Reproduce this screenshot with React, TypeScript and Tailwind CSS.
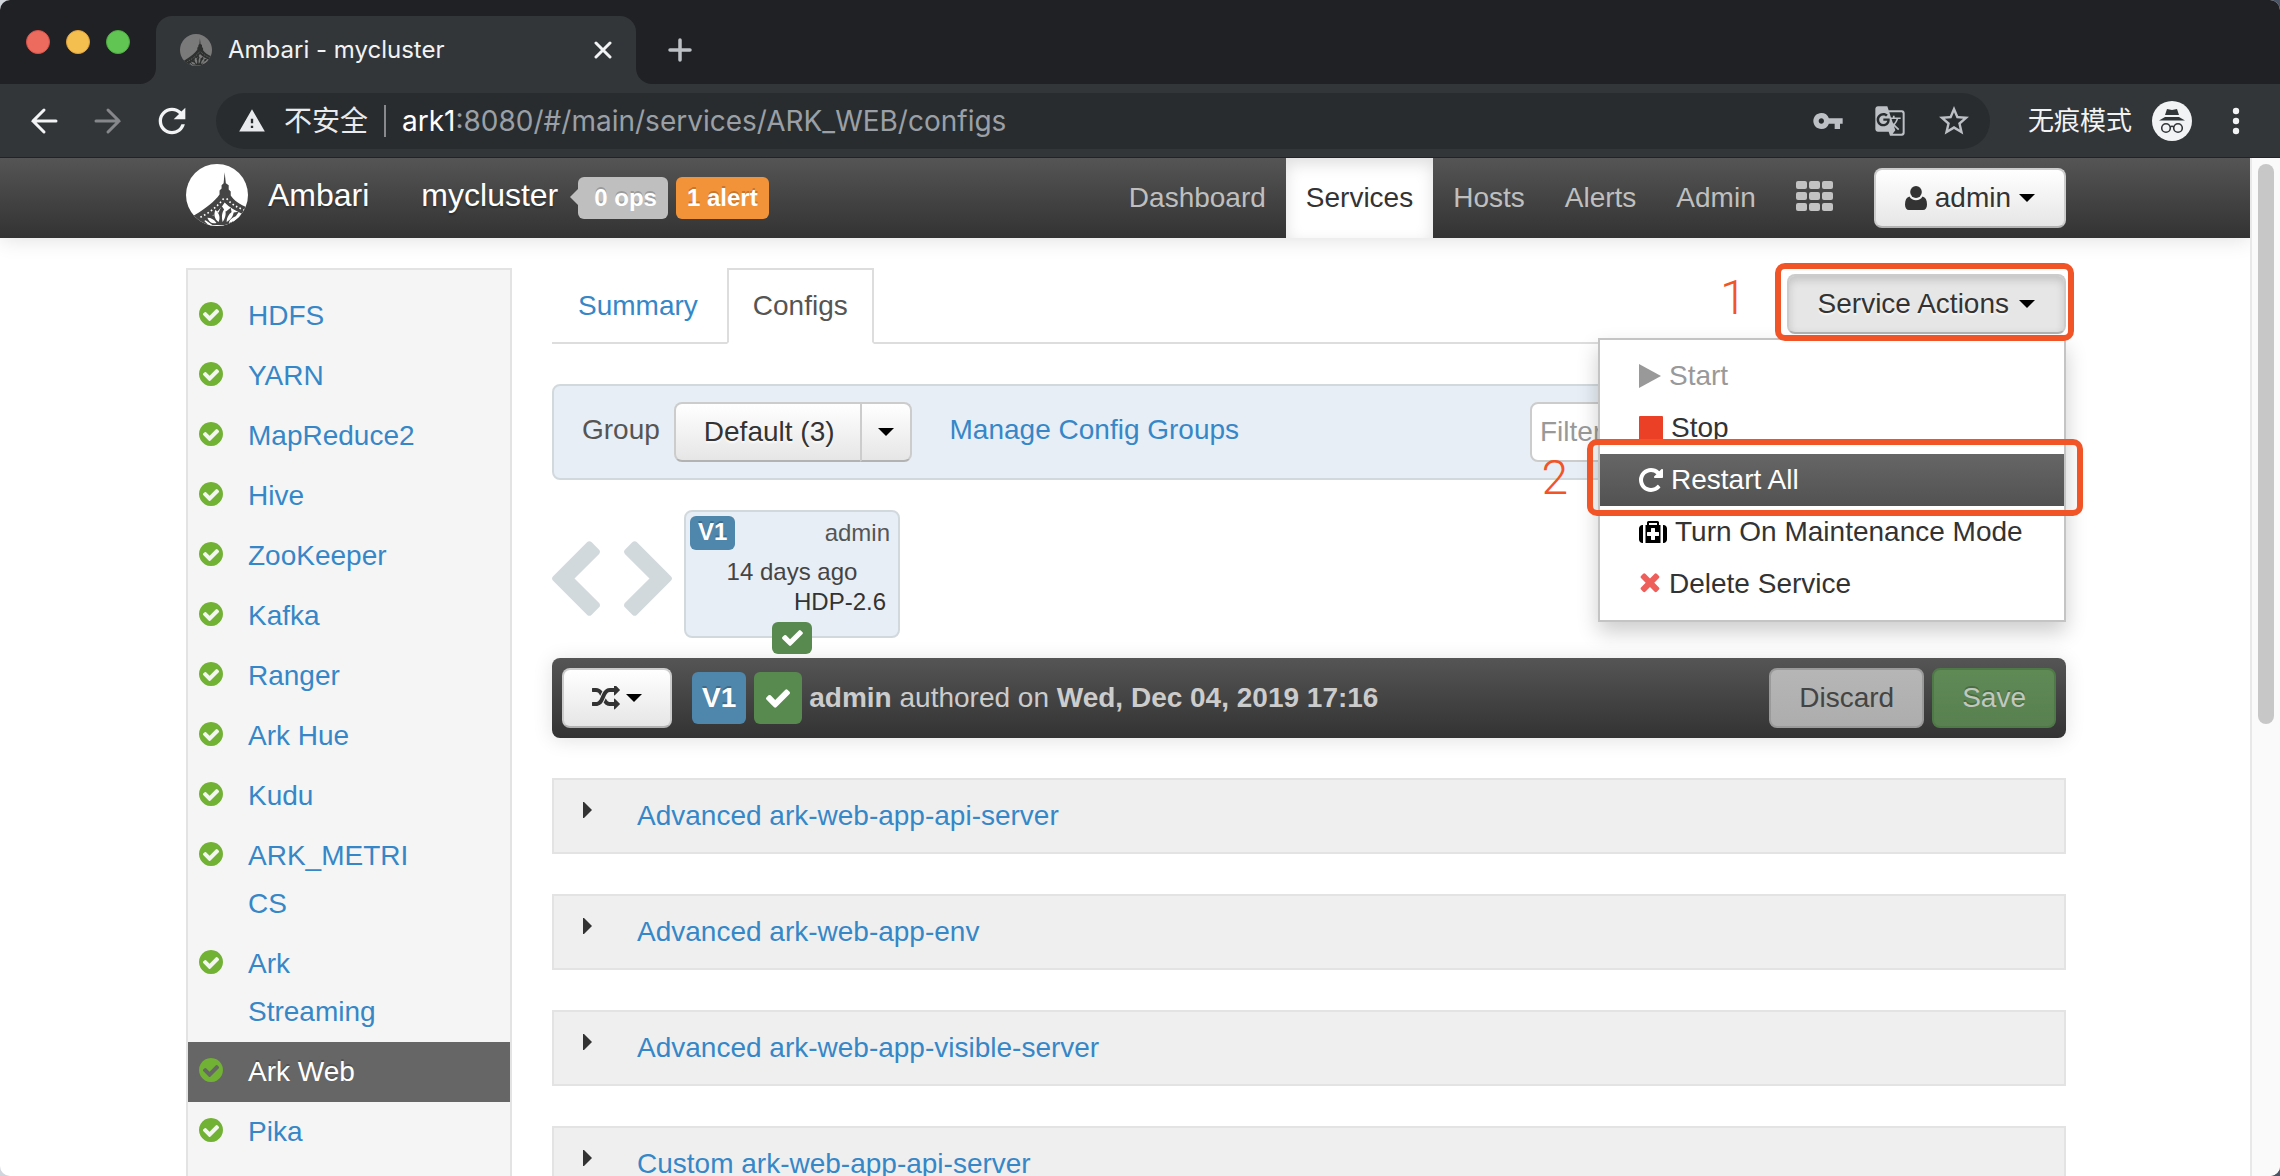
import { Fragment, type ReactNode } from "react";
import { MdGTranslate, MdRefresh, MdStarBorder, MdVpnKey, MdWarning } from "react-icons/md";

const CHECK_CIRCLE =
  "M1412 734q0-28-18-46l-91-90q-19-19-45-19t-45 19l-408 407-226-226q-19-19-45-19t-45 19l-91 90q-18 18-18 46 0 27 18 45l362 362q19 19 45 19 27 0 46-19l543-543q18-18 18-45zm252 162q0 209-103 385.5t-279.5 279.5-385.5 103-385.5-103-279.5-279.5-103-385.5 103-385.5 279.5-279.5 385.5-103 385.5 103 279.5 279.5 103 385.5z";
const CHECK =
  "M1671 566q0 40-28 68l-724 724-136 136q-28 28-68 28t-68-28l-136-136-362-362q-28-28-28-68t28-68l136-136q28-28 68-28t68 28l294 295 656-657q28-28 68-28t68 28l136 136q28 28 28 68z";
const TIMES =
  "M1490 1322q0 40-28 68l-136 136q-28 28-68 28t-68-28l-294-294-294 294q-28 28-68 28t-68-28l-136-136q-28-28-28-68t28-68l294-294-294-294q-28-28-28-68t28-68l136-136q28-28 68-28t68 28l294 294 294-294q28-28 68-28t68 28l136 136q28 28 28 68t-28 68l-294 294 294 294q28 28 28 68z";
const REPEAT =
  "M1664 256v448q0 26-19 45t-45 19h-448q-42 0-59-40-17-39 14-69l138-138q-148-137-349-137-104 0-198.5 40.5t-163.5 109.5-109.5 163.5-40.5 198.5 40.5 198.5 109.5 163.5 163.5 109.5 198.5 40.5q119 0 225-52t179-147q7-10 23-12 15 0 25 9l137 138q9 8 9.5 20.5t-7.5 22.5q-109 132-264 204.5t-327 72.5q-156 0-298-61t-245-164-164-245-61-298 61-298 164-245 245-164 298-61q147 0 284.5 55.5t244.5 156.5l130-129q29-31 70-14 39 17 39 59z";
const RANDOM =
  "M666 481q-60 92-137 273-22-45-37-72.5t-40.5-63.5-51-56.5-63-35-81.5-14.5h-224q-14 0-23-9t-9-23v-192q0-14 9-23t23-9h224q250 0 410 225zm1126 799q0 14-9 23l-320 320q-9 9-23 9-13 0-22.5-9.5t-9.5-22.5v-192q-32 0-85 .5t-81 1-73-1-71-5-64-10.5-63-18.5-58-28.5-59-40-55-53.5-56-69.5q59-93 136-273 22 45 37 72.5t40.5 63.5 51 56.5 63 35 81.5 14.5h256v-192q0-14 9-23t23-9q12 0 24 10l319 319q9 9 9 23zm0-896q0 14-9 23l-320 320q-9 9-23 9-13 0-22.5-9.5t-9.5-22.5v-192h-256q-48 0-87 15t-69 45-51 61.5-45 77.5q-32 62-78 171-29 66-49.5 111t-54 105-64 100-74 83-90 68.5-106.5 42-128 16.5h-224q-14 0-23-9t-9-23v-192q0-14 9-23t23-9h224q48 0 87-15t69-45 51-61.5 45-77.5q32-62 78-171 29-66 49.5-111t54-105 64-100 74-83 90-68.5 106.5-42 128-16.5h256v-192q0-14 9-23t23-9q12 0 24 10l319 319q9 9 9 23z";
const MEDKIT =
  "M1280 1056v-192q0-14-9-23t-23-9h-224v-224q0-14-9-23t-23-9h-192q-14 0-23 9t-9 23v224h-224q-14 0-23 9t-9 23v192q0 14 9 23t23 9h224v224q0 14 9 23t23 9h192q14 0 23-9t9-23v-224h224q14 0 23-9t9-23zm-640-672h512v-128h-512v128zm-384 0v1152h-32q-92 0-158-66t-66-158v-704q0-92 66-158t158-66h32zm1120 0v1152h-960v-1152h96v-160q0-40 28-68t68-28h576q40 0 68 28t28 68v160h96zm416 224v704q0 92-66 158t-158 66h-32v-1152h32q92 0 158 66t66 158z";
const CHEVRON =
  "M1427 301l-531 531 531 531q19 19 19 45t-19 45l-166 166q-19 19-45 19t-45-19l-742-742q-19-19-19-45t19-45l742-742q19-19 45-19t45 19l166 166q19 19 19 45t-19 45z";

function Glyph({ d, viewBox, className }: { d: string; viewBox: string; className: string }) {
  return (
    <svg viewBox={viewBox} className={className} fill="currentColor" fillRule="evenodd" aria-hidden="true">
      <path d={d} />
    </svg>
  );
}

function Caret({ className = "" }: { className?: string }) {
  return (
    <svg viewBox="0 0 16 8" className={`h-2 w-4 shrink-0 text-black ${className}`} fill="currentColor" aria-hidden="true">
      <path d="M0 0h16L8 8z" />
    </svg>
  );
}

function AmbariLogo({ className, light, dark }: { className: string; light: string; dark: string }) {
  return (
    <svg viewBox="0 0 61 61" className={className} aria-hidden="true">
      <clipPath id={`disc-${light.slice(1)}`}>
        <circle cx="30.5" cy="30.5" r="30.5" />
      </clipPath>
      <g clipPath={`url(#disc-${light.slice(1)})`}>
        <path d="M0 0h61v61H0z" fill={light} />
        <path
          d="M38 8l1.2 11 2.8 2v4l2 2v4c3 5 9 9 17 12v18H0V54l9-4c10-6 19-13 24-20v-4l2-2v-3l2-2z"
          fill={dark}
        />
        <path d="M37 34c-6 8-14 14-24 19" fill="none" stroke={light} strokeWidth="1.6" strokeDasharray="1.6 2.4" />
        <path d="M40 34c5 6 11 9 19 12" fill="none" stroke={light} strokeWidth="1.6" strokeDasharray="1.6 2.4" />
        <path d="M38 38c5 5 10 8 17 11l-3 6-14 6H23l-5-5c9-5 15-10 20-18z" fill={light} />
        <path d="M22 50l5 1 1-5 4 2 3-7 4 6 5-4 1 5 7-1-4 6-3 7H26l-7-5z" fill={dark} />
        <path
          d="M29 45c4 4 5 8 3 12-4-3-5-7-3-12zM38 44c2 4 1 9-2 13-1-5-1-9 2-13zM47 46c0 5-3 9-7 11 0-5 3-9 7-11zM21 53c4 0 7 2 9 5-4 1-7 0-9-5zM53 51c-3 4-7 6-11 7 2-5 6-7 11-7z"
          fill={light}
        />
      </g>
    </svg>
  );
}

const softButton =
  "flex h-[60px] items-center rounded-lg border-2 border-[#cccccc] border-b-[#b3b3b3] bg-linear-to-b from-white to-[#e6e6e6] text-[#333333] [text-shadow:0_2px_2px_rgba(255,255,255,0.75)]";

function BrowserChrome() {
  return (
    <header className="shrink-0 bg-[#202124] font-['Inter','Noto_Sans_CJK_SC',sans-serif]">
      <div className="flex h-[84px] items-end">
        <div className="flex h-[84px] w-[156px] items-center gap-4 pr-6 pl-[26px]">
          <button aria-label="Close window" className="size-6 shrink-0 rounded-full border border-[#d8534a] bg-[#ed6a5e]" />
          <button aria-label="Minimize window" className="size-6 shrink-0 rounded-full border border-[#dfa23c] bg-[#f5bf4f]" />
          <button aria-label="Zoom window" className="size-6 shrink-0 rounded-full border border-[#4fab41] bg-[#61c554]" />
        </div>
        <div className="relative flex h-[68px] w-[480px] items-center rounded-t-2xl bg-[#333639] px-6">
          <svg viewBox="0 0 16 16" className="absolute right-full bottom-0 size-4 text-[#333639]" fill="currentColor" aria-hidden="true">
            <path d="M16 0v16H0A16 16 0 0 0 16 0z" />
          </svg>
          <svg viewBox="0 0 16 16" className="absolute bottom-0 left-full size-4 text-[#333639]" fill="currentColor" aria-hidden="true">
            <path d="M0 0v16h16A16 16 0 0 1 0 0z" />
          </svg>
          <AmbariLogo className="size-8" light="#7a7a7a" dark="#2e3030" />
          <span className="ml-4 text-[24px] text-[#f1f3f4]">Ambari - mycluster</span>
          <button aria-label="Close tab" className="ml-auto text-[#f1f3f4]">
            <svg viewBox="0 0 18 18" className="size-[18px]" stroke="currentColor" strokeWidth="3" strokeLinecap="round" aria-hidden="true">
              <path d="M2 2l14 14M16 2L2 16" />
            </svg>
          </button>
        </div>
        <button aria-label="New tab" className="mb-[22px] ml-8 text-[#bdc1c6]">
          <svg viewBox="0 0 24 24" className="size-6" stroke="currentColor" strokeWidth="3.5" strokeLinecap="round" aria-hidden="true">
            <path d="M12 2v20M2 12h20" />
          </svg>
        </button>
      </div>
      <div className="flex h-[74px] items-center border-b border-[#222325] bg-[#333639] pr-[34px] pl-[30px]">
        <button aria-label="Back" className="text-[#f1f3f4]">
          <svg viewBox="0 0 28 28" className="size-7" fill="none" stroke="currentColor" strokeWidth="3" strokeLinecap="round" aria-hidden="true">
            <path d="M26 14H3M14 3L3 14l11 11" />
          </svg>
        </button>
        <button aria-label="Forward" className="ml-9 text-[#85878a]">
          <svg viewBox="0 0 28 28" className="size-7" fill="none" stroke="currentColor" strokeWidth="3" strokeLinecap="round" aria-hidden="true">
            <path d="M2 14h23M14 3l11 11-11 11" />
          </svg>
        </button>
        <button aria-label="Reload" className="ml-[30px] text-[#f1f3f4]">
          <MdRefresh className="size-10" />
        </button>
        <div className="ml-6 flex h-14 min-w-0 flex-1 items-center rounded-full bg-[#292c2f] pr-[18px] pl-[22px]">
          <MdWarning className="size-7 shrink-0 text-[#e8eaed]" />
          <span className="ml-[18px] text-[28px] text-[#e8eaed]">不安全</span>
          <span className="ml-4 h-8 w-[2px] bg-[#87898c]" />
          <p className="ml-4 text-[28px] text-[#9aa0a6]">
            <span className="text-white">ark1</span>:8080/#/main/services/ARK_WEB/configs
          </p>
          <div className="ml-auto flex items-center gap-[30px] text-[#bdc1c6]">
            <button aria-label="Saved passwords">
              <MdVpnKey className="size-8" />
            </button>
            <button aria-label="Translate this page">
              <MdGTranslate className="size-8" />
            </button>
            <button aria-label="Bookmark this page">
              <MdStarBorder className="size-9" />
            </button>
          </div>
        </div>
        <span className="ml-[38px] text-[26px] text-[#f1f3f4]">无痕模式</span>
        <svg viewBox="0 0 40 40" className="ml-5 size-10" aria-hidden="true">
          <circle cx="20" cy="20" r="20" fill="#f1f3f4" />
          <path d="M15 8l5 1 5-1 2 6H13z" fill="#333639" />
          <path d="M7 19.500l6-3.500h14l6 3.500z" fill="#333639" />
          <g fill="none" stroke="#333639" strokeWidth="1.600">
            <circle cx="14" cy="27" r="4.300" />
            <circle cx="26" cy="27" r="4.300" />
            <path d="M18 26q2-1.500 4 0" />
          </g>
        </svg>
        <button aria-label="Browser menu" className="ml-[34px] text-[#f1f3f4]">
          <svg viewBox="0 0 20 28" className="h-7 w-5" fill="currentColor" aria-hidden="true">
            <circle cx="10" cy="4" r="3.200" />
            <circle cx="10" cy="14" r="3.200" />
            <circle cx="10" cy="24" r="3.200" />
          </svg>
        </button>
      </div>
    </header>
  );
}

function NavBar() {
  return (
    <div className="relative z-10 bg-linear-to-b from-[#555555] to-[#333333] pl-[2px] text-[28px] shadow-[0_2px_20px_rgba(0,0,0,0.12)]">
      <div className="mx-auto flex h-20 w-full max-w-[1880px] items-center">
        <a href="#" className="flex items-center pb-[6px] text-[32px] text-white [text-shadow:0_2px_2px_rgba(0,0,0,0.3)]">
          <AmbariLogo className="size-[62px]" light="#ffffff" dark="#454545" />
          <span className="ml-5 leading-[74px]">Ambari</span>
        </a>
        <a href="#" className="ml-[52px] pb-[6px] text-[32px] text-white leading-[74px] [text-shadow:0_2px_2px_rgba(0,0,0,0.3)]">
          mycluster
        </a>
        <button className="relative ml-5 h-[42px] rounded-md bg-[#bfbfbf] pr-[11px] pl-4 text-[24px] font-bold leading-[42px] text-white [text-shadow:0_-2px_0_rgba(0,0,0,0.2)]">
          <svg viewBox="0 0 8 16" className="absolute top-3 right-full h-4 w-2 text-[#bfbfbf]" fill="currentColor" aria-hidden="true">
            <path d="M8 0v16L0 8z" />
          </svg>
          0 ops
        </button>
        <button className="ml-2 h-[42px] rounded-md bg-[#f29339] px-[11px] text-[24px] font-bold leading-[42px] text-white [text-shadow:0_-2px_0_rgba(0,0,0,0.2)]">
          1 alert
        </button>
        <nav className="ml-auto flex text-[#bfbfbf] leading-[80px]">
          <a href="#" className="h-20 px-5">Dashboard</a>
          <a href="#" aria-current="page" className="h-20 bg-white px-5 text-[#333333] shadow-[inset_0_6px_16px_rgba(0,0,0,0.13)]">
            Services
          </a>
          <a href="#" className="h-20 px-5">Hosts</a>
          <a href="#" className="h-20 px-5">Alerts</a>
          <a href="#" className="h-20 px-5">Admin</a>
        </nav>
        <button aria-label="Views" className="ml-5 pb-[4px] text-[#c2c2c2]">
          <svg viewBox="0 0 38 30" className="h-[30px] w-[38px]" fill="currentColor" aria-hidden="true">
            {[0, 11, 22].map((y) => (
              <Fragment key={y}>
                <rect x="0" y={y} width="11" height="8" rx="2" />
                <rect x="13" y={y} width="11" height="8" rx="2" />
                <rect x="26" y={y} width="11" height="8" rx="2" />
              </Fragment>
            ))}
          </svg>
        </button>
        <button className={`${softButton} ml-10 px-[29px]`}>
          <svg viewBox="0 0 22 24" className="h-6 w-[22px]" fill="currentColor" aria-hidden="true">
            <ellipse cx="11" cy="6" rx="5.800" ry="6" />
            <path d="M4.500 10.500a7.500 7.500 0 0 0 13 0c3 .7 4.500 3.500 4.500 8 0 3.500-1.500 5.500-4 5.500H4c-2.500 0-4-2-4-5.500 0-4.500 1.500-7.300 4.500-8z" />
          </svg>
          <span className="ml-2">admin</span>
          <Caret className="ml-2" />
        </button>
      </div>
    </div>
  );
}

const services = [
  "HDFS", "YARN", "MapReduce2", "Hive", "ZooKeeper", "Kafka", "Ranger", "Ark Hue",
  "Kudu", "ARK_METRICS", "Ark Streaming", "Ark Web", "Pika",
];

function Sidebar() {
  return (
    <aside className="w-[326px] shrink-0 self-stretch border-2 border-[#e3e3e3] bg-[#f5f5f5] py-4">
      <ul className="text-[28px] leading-[48px]">
        {services.map((name) => {
          const active = name === "Ark Web";
          return (
            <li key={name}>
              <a
                href="#"
                className={
                  active
                    ? "flex items-start bg-[#666666] py-[6px] pl-[11px] text-white [text-shadow:0_-2px_0_rgba(0,0,0,0.2)]"
                    : "flex items-start py-[6px] pl-[11px] text-[#3587c8]"
                }
              >
                <Glyph d={CHECK_CIRCLE} viewBox="128 128 1536 1536" className="mt-[10px] size-6 shrink-0 text-[#71b134]" />
                <span className="ml-[25px] w-[176px] break-words">{name}</span>
              </a>
            </li>
          );
        })}
      </ul>
    </aside>
  );
}

function Callout({ className }: { className: string }) {
  return <span className={`pointer-events-none absolute z-20 rounded-[10px] border-[6px] border-[#f15427] ${className}`} />;
}

const menuItem = "flex h-[52px] w-full items-center pl-[39px] text-left";

function MenuRow({ icon, children, tone = "text-[#333333]" }: { icon: ReactNode; children: ReactNode; tone?: string }) {
  return (
    <li>
      <button className={`${menuItem} gap-2 ${tone}`}>
        {icon}
        {children}
      </button>
    </li>
  );
}

function ServiceActions() {
  return (
    <div className="relative z-10 mt-[6px] ml-auto self-start text-[28px]">
      <button className="flex h-[60px] items-center gap-[10px] rounded-lg border-2 border-[#cccccc] border-b-[#b3b3b3] bg-[#e6e6e6] px-[29px] text-[#333333] shadow-[inset_0_4px_8px_rgba(0,0,0,0.15)] [text-shadow:0_2px_2px_rgba(255,255,255,0.75)]">
        Service Actions
        <Caret />
      </button>
      <Callout className="top-[-11px] right-[-8px] bottom-[-7px] left-[-12px]" />
      <span className="absolute top-0 right-full mr-10 font-['Roboto',sans-serif] text-[48px] font-light leading-[48px] text-[#f15427]">1</span>
      <ul className="absolute top-full right-0 mt-1 w-[468px] border-2 border-[#c4c4c4] bg-white py-[10px] shadow-[0_10px_20px_rgba(0,0,0,0.2)]">
        <MenuRow
          tone="text-[#999999]"
          icon={
            <svg viewBox="0 0 22 24" className="h-6 w-[22px]" fill="currentColor" aria-hidden="true">
              <path d="M0 0l22 12L0 24z" />
            </svg>
          }
        >
          Start
        </MenuRow>
        <MenuRow icon={<span className="size-6 rounded-[1px] bg-[#ec4026]" />}>Stop</MenuRow>
        <li className="relative">
          <button className={`${menuItem} gap-2 bg-linear-to-b from-[#666666] to-[#525252] text-white`}>
            <Glyph d={REPEAT} viewBox="128 128 1536 1536" className="size-6" />
            Restart All
          </button>
          <Callout className="top-[-15px] right-[-19px] bottom-[-10px] left-[-13px]" />
          <span className="absolute top-0 right-full mr-8 font-['Roboto',sans-serif] text-[48px] font-light leading-[48px] text-[#f15427]">2</span>
        </li>
        <MenuRow icon={<Glyph d={MEDKIT} viewBox="0 128 1792 1408" className="h-[22px] w-7 text-black" />}>
          Turn On Maintenance Mode
        </MenuRow>
        <MenuRow icon={<Glyph d={TIMES} viewBox="203 345 1387 1387" className="size-[22px] text-[#ee5f5b]" />}>
          Delete Service
        </MenuRow>
      </ul>
    </div>
  );
}

const sections = [
  "Advanced ark-web-app-api-server",
  "Advanced ark-web-app-env",
  "Advanced ark-web-app-visible-server",
  "Custom ark-web-app-api-server",
];

function ConfigPanel() {
  return (
    <main className="ml-10 min-w-0 flex-1 text-[28px]">
      <div className="flex h-[76px] items-end border-b-2 border-[#dddddd]">
        <a href="#" className="mr-[3px] mb-[-2px] border-2 border-transparent px-6 py-4 leading-10 text-[#3587c8]">
          Summary
        </a>
        <a href="#" className="mb-[-2px] border-2 border-[#dddddd] border-b-white bg-white px-6 py-4 leading-10 text-[#555555]">
          Configs
        </a>
        <ServiceActions />
      </div>

      <div className="mt-10 flex h-24 items-start rounded-lg border-2 border-[#d2d9dd] bg-[#e7eef5] py-4 pr-6 pl-7">
        <span className="leading-[56px] text-[#555555]">Group</span>
        <div className="ml-[14px] flex">
          <button className={`${softButton} rounded-r-none pr-[25px] pl-7`}>Default (3)</button>
          <button aria-label="Choose config group" className={`${softButton} -ml-[2px] rounded-l-none px-4`}>
            <Caret />
          </button>
        </div>
        <a href="#" className="ml-[38px] leading-[56px] text-[#3587c8]">
          Manage Config Groups
        </a>
        <input
          aria-label="Filter"
          placeholder="Filter..."
          className="ml-auto h-[60px] w-[510px] rounded-lg border-2 border-[#cccccc] bg-white px-2 placeholder:text-[#999999]"
        />
      </div>

      <div className="mt-[30px] flex h-32 items-center">
        <button aria-label="Newer versions" className="pt-2 text-[#d2d9dd]">
          <Glyph d={CHEVRON} viewBox="410 26 1036 1612" className="h-[75px] w-12" />
        </button>
        <button aria-label="Older versions" className="ml-6 pt-2 text-[#d2d9dd]">
          <Glyph d={CHEVRON} viewBox="410 26 1036 1612" className="h-[75px] w-12 rotate-180" />
        </button>
        <div className="relative ml-3 h-32 w-[216px] rounded-lg border-2 border-[#d2d9dd] bg-[#e7eef5] p-1 text-[24px] leading-[30px] text-[#444444]">
          <div className="flex h-[34px] items-center justify-between pr-1">
            <span className="h-[34px] rounded-md bg-[#4e86ac] px-2 font-bold leading-[32px] text-white [text-shadow:0_-2px_0_rgba(0,0,0,0.2)]">
              V1
            </span>
            <span className="leading-[32px] text-[#555555]">admin</span>
          </div>
          <div className="mt-[7px] text-center">14 days ago</div>
          <div className="pr-2 text-right text-[#333333]">HDP-2.6</div>
          <span className="absolute top-[110px] left-[86px] flex h-8 w-10 items-center justify-center rounded-md bg-[#58894f] text-white">
            <Glyph d={CHECK} viewBox="121 334 1550 1188" className="h-4 w-[21px]" />
          </span>
        </div>
      </div>

      <div className="mt-5 flex h-20 items-center rounded-lg bg-linear-to-b from-[#555555] to-[#333333] px-[10px] text-[#cccccc] shadow-[0_2px_20px_rgba(0,0,0,0.12)]">
        <button aria-label="Compare versions" className={`${softButton} gap-[6px] px-7`}>
          <Glyph d={RANDOM} viewBox="0 128 1792 1536" className="h-6 w-7" />
          <Caret />
        </button>
        <span className="ml-5 h-[52px] rounded-md bg-[#4e86ac] px-[10px] font-bold leading-[52px] text-white [text-shadow:0_-2px_0_rgba(0,0,0,0.2)]">
          V1
        </span>
        <span className="ml-2 flex h-[52px] w-12 items-center justify-center rounded-md bg-[#58894f] text-white">
          <Glyph d={CHECK} viewBox="121 334 1550 1188" className="h-[19px] w-6" />
        </span>
        <p className="ml-[7px]">
          <b>admin</b> authored on <b>Wed, Dec 04, 2019 17:16</b>
        </p>
        <button className="ml-auto h-[60px] rounded-lg border-2 border-[#9a9a9a] bg-linear-to-b from-[#b6b6b6] to-[#adadad] px-7 text-[#444444]">
          Discard
        </button>
        <button className="ml-2 h-[60px] rounded-lg border-2 border-[#4f7a47] bg-linear-to-b from-[#5f8a56] to-[#588050] px-7 text-[#c0c8bf] [text-shadow:0_-2px_0_rgba(0,0,0,0.2)]">
          Save
        </button>
      </div>

      {sections.map((title) => (
        <section key={title} className="mt-10 flex h-[76px] items-center border-2 border-[#e3e3e3] bg-[#efefef] pl-[29px]">
          <button className="flex items-center leading-10 text-[#3587c8]">
            <svg viewBox="0 0 9 16" className="mb-3 h-4 w-[9px] text-[#333333]" fill="currentColor" aria-hidden="true">
              <path d="M0 0h1l8 8-8 8H0z" />
            </svg>
            <span className="ml-[45px]">{title}</span>
          </button>
        </section>
      ))}
    </main>
  );
}

export default function App() {
  return (
    <div className="h-screen bg-linear-to-r from-gray-300 to-gray-600">
      <div className="flex h-full flex-col overflow-hidden rounded-[10px] bg-white">
        <BrowserChrome />
        <div className="flex min-h-0 flex-1 font-['Liberation_Sans',Arial,sans-serif]">
          <div className="h-full min-w-0 flex-1 overflow-hidden">
            <NavBar />
            <div className="pl-[2px]">
              <div className="mx-auto mt-[30px] flex w-full max-w-[1880px]">
                <Sidebar />
                <ConfigPanel />
              </div>
            </div>
          </div>
          <div className="h-full w-[30px] shrink-0 border-l-2 border-[#e8e8e8] bg-[#fafafa] px-[6px] pt-[6px]">
            <div className="h-[560px] w-4 rounded-full bg-[#c7c7c7]" />
          </div>
        </div>
      </div>
    </div>
  );
}
